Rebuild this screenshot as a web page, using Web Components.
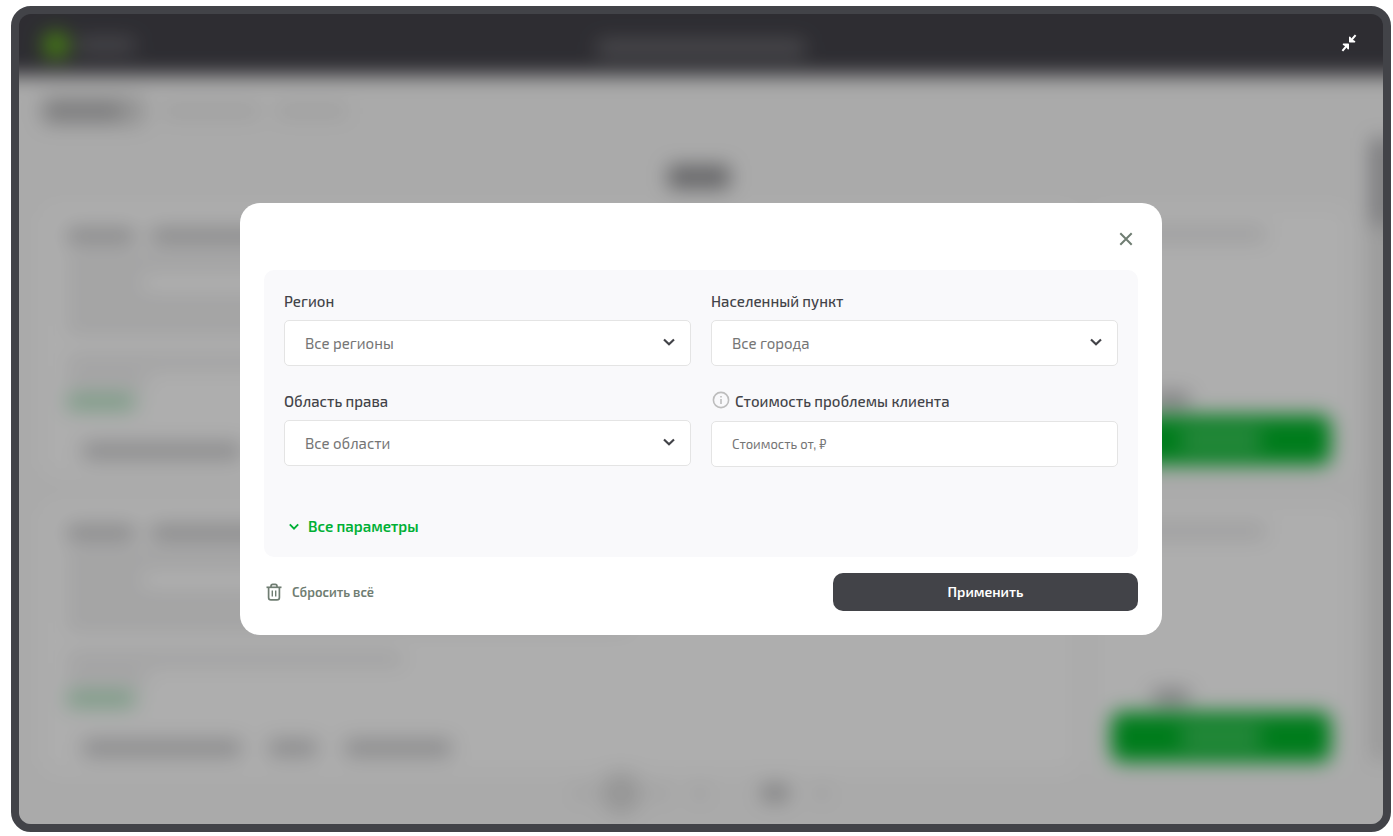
<!DOCTYPE html>
<html lang="ru">
<head>
<meta charset="utf-8">
<meta name="viewport" content="width=device-width, initial-scale=1">
<title>Фильтр заявок</title>
<style>
  html, body {
    height: 100%;
    margin: 0;
  }
  body {
    box-sizing: border-box;
    padding: 6px 2px 4px 11px;
    background: #fff;
    color: #424348;
    font: 15px/22px "Exo 2", Roboto, "Noto Sans", sans-serif;
  }
</style>
</head>
<body>
<app-frame>
  <page-backdrop></page-backdrop>
  <filter-modal slot="modal"></filter-modal>
</app-frame>

<script>
// Dark rounded frame: the page inside, the dimmed layer and the modal over it
class AppFrame extends HTMLElement {
  constructor() {
    super();
    this.attachShadow({ mode: 'open' });
  }

  connectedCallback() {
    this.shadowRoot.innerHTML = `
      <style>
        :host {
          display: block;
          box-sizing: border-box;
          position: relative;
          height: 100%;
          border: 8px solid #424348;
          border-radius: 20px;
          background: #424348;
        }
        .page {
          height: 100%;
          overflow: hidden;
          border-radius: 12px;
        }
        .overlay {
          position: absolute;
          inset: 0;
          display: grid;
          place-items: center;
          border-radius: 12px;
          background: rgba(0, 0, 0, .3);
        }
        .collapse {
          position: absolute;
          top: 17px;
          right: 22px;
          display: grid;
          place-items: center;
          width: 24px;
          height: 24px;
          padding: 0;
          border: 0;
          background: none;
          color: #fff;
          cursor: pointer;
        }
      </style>
      <div class="page"><slot></slot></div>
      <div class="overlay">
        <button class="collapse" type="button" aria-label="Свернуть">
          <svg width="16" height="18" viewBox="0 0 16 18" fill="currentColor" stroke="currentColor">
            <path d="M14.6 1.2 10 6.5M1.4 16.8 6 11.5" stroke-width="2"/>
            <path d="M8.7 3.2V7.7H13.6L11 6.2 10 5ZM7.3 14.8V10.3H2.4L5 11.8 6 13Z" stroke-width="1.4" stroke-linejoin="round"/>
          </svg>
        </button>
        <slot name="modal"></slot>
      </div>
    `;
  }
}
customElements.define('app-frame', AppFrame);

// One line of placeholder content
class SkeletonBar extends HTMLElement {
  constructor() {
    super();
    this.attachShadow({ mode: 'open' });
  }

  connectedCallback() {
    this.shadowRoot.innerHTML = `
      <style>
        :host {
          display: block;
          flex: none;
          width: ${this.getAttribute('w')}px;
          max-width: 100%;
          height: ${this.getAttribute('h') || 12}px;
          border-radius: 4px;
          background: var(--bar, rgba(66, 66, 72, .12));
        }
      </style>
    `;
  }
}
customElements.define('skeleton-bar', SkeletonBar);

// Order card: description on the left, price and action on the right
class OrderCard extends HTMLElement {
  constructor() {
    super();
    this.attachShadow({ mode: 'open' });
  }

  connectedCallback() {
    this.shadowRoot.innerHTML = `
      <style>
        :host {
          display: grid;
          grid-template-columns: 1fr 256px;
          gap: 16px;
          height: 268px;
        }
        .info, .side {
          display: flex;
          flex-direction: column;
          box-sizing: border-box;
          border-radius: 16px;
          background: #f9f9f9;
        }
        .info {
          gap: 9px;
          padding: 22px 24px 0;
        }
        .side {
          padding: 20px 18px 10px;
        }
        .row {
          display: flex;
          gap: 16px;
        }
        .title {
          --bar: rgba(66, 66, 72, .32);
          margin-bottom: 4px;
        }
        .block {
          margin-top: 17px;
        }
        .status {
          --bar: rgba(0, 160, 50, .34);
        }
        .chips {
          --bar: rgba(66, 66, 72, .28);
          gap: 28px;
          padding: 25px 16px 0;
        }
        .price {
          --bar: rgba(66, 66, 72, .4);
          margin: auto 0 8px 42px;
        }
        .action {
          --bar: rgba(255, 255, 255, .26);
          display: grid;
          place-items: center;
          height: 50px;
          border-radius: 10px;
          background: #00b228;
        }
      </style>
      <div class="info">
        <div class="row title">
          <skeleton-bar w="68" h="14"></skeleton-bar>
          <skeleton-bar w="240" h="14"></skeleton-bar>
        </div>
        <skeleton-bar w="400"></skeleton-bar>
        <skeleton-bar w="76"></skeleton-bar>
        <skeleton-bar w="600"></skeleton-bar>
        <skeleton-bar w="560"></skeleton-bar>
        <skeleton-bar class="block" w="335" h="10"></skeleton-bar>
        <skeleton-bar w="80" h="10"></skeleton-bar>
        <skeleton-bar class="status" w="68" h="14"></skeleton-bar>
        <div class="row chips">
          <skeleton-bar w="158" h="16"></skeleton-bar>
          <skeleton-bar w="48" h="16"></skeleton-bar>
          <skeleton-bar w="106" h="16"></skeleton-bar>
        </div>
      </div>
      <div class="side">
        <skeleton-bar w="154" h="14"></skeleton-bar>
        <skeleton-bar class="price" w="36" h="14"></skeleton-bar>
        <div class="action"><skeleton-bar w="80" h="20"></skeleton-bar></div>
      </div>
    `;
  }
}
customElements.define('order-card', OrderCard);

// The page behind the modal. The shadows carry its colours past the edges,
// so that the blur does not fade there
class PageBackdrop extends HTMLElement {
  constructor() {
    super();
    this.attachShadow({ mode: 'open' });
  }

  connectedCallback() {
    this.setAttribute('aria-hidden', 'true');
    this.shadowRoot.innerHTML = `
      <style>
        :host {
          display: flex;
          flex-direction: column;
          height: 100%;
          background: #f4f4f4;
          box-shadow: 0 0 0 40px #f4f4f4;
          filter: blur(10px);
        }
        header {
          display: grid;
          grid-template-columns: 1fr auto 1fr;
          align-items: center;
          height: 61px;
          padding: 0 24px;
          background: #424148;
          box-shadow: 0 -40px 0 40px #424148;
        }
        .brand, .tabs, .pages {
          display: flex;
          align-items: center;
        }
        .brand {
          --bar: rgba(255, 255, 255, .22);
          gap: 8px;
        }
        .brand i {
          width: 26px;
          height: 26px;
          border-radius: 50%;
          background: #68bc1c;
        }
        .name {
          --bar: rgba(255, 255, 255, .24);
          margin-top: 6px;
        }
        main {
          display: grid;
          grid-template-columns: 1fr 10px;
          flex: 1;
          min-height: 0;
        }
        .content {
          display: flex;
          flex-direction: column;
          padding: 21px 24px 0 22px;
        }
        .tabs {
          gap: 18px;
          --bar: rgba(66, 66, 72, .09);
        }
        .tabs div {
          --bar: rgba(66, 66, 72, .26);
          box-sizing: border-box;
          width: 104px;
          padding: 7px 4px;
          border-radius: 8px;
          background: #d4d4d4;
        }
        .heading {
          --bar: rgba(66, 66, 72, .54);
          align-self: center;
          margin: 39px 0 18px 8px;
        }
        .cards {
          display: flex;
          flex-direction: column;
          gap: 29px;
          margin-left: 2px;
        }
        .pages {
          gap: 28px;
          justify-content: center;
          margin-left: 14px;
        }
        .pages i {
          width: 42px;
          height: 42px;
          margin: 0 -16px;
          border-radius: 50%;
          background: #d8d8d8;
        }
        .last {
          --bar: rgba(66, 66, 72, .36);
          margin-left: 28px;
        }
        .scroll {
          margin: 63px 0 64px;
          background: #ccc;
          box-shadow: 20px 0 #ccc;
        }
        .scroll i {
          display: block;
          height: 87px;
          background: #86868c;
          box-shadow: 20px 0 #86868c;
        }
      </style>
      <header>
        <div class="brand"><i></i><skeleton-bar w="58" h="14"></skeleton-bar></div>
        <skeleton-bar class="name" w="208" h="16"></skeleton-bar>
      </header>
      <main>
        <div class="content">
          <div class="tabs">
            <div><skeleton-bar w="76" h="16"></skeleton-bar></div>
            <skeleton-bar w="96" h="14"></skeleton-bar>
            <skeleton-bar w="70" h="14"></skeleton-bar>
          </div>
          <skeleton-bar class="heading" w="62" h="24"></skeleton-bar>
          <div class="cards">
            <order-card></order-card>
            <order-card></order-card>
          </div>
          <div class="pages">
            <skeleton-bar w="12"></skeleton-bar>
            <i></i>
            <skeleton-bar w="12"></skeleton-bar>
            <skeleton-bar w="12"></skeleton-bar>
            <skeleton-bar class="last" w="26" h="16"></skeleton-bar>
            <skeleton-bar w="12"></skeleton-bar>
          </div>
        </div>
        <div class="scroll"><i></i></div>
      </main>
    `;
  }
}
customElements.define('page-backdrop', PageBackdrop);

// Labelled drop-down, the label comes through the slot
class SelectField extends HTMLElement {
  constructor() {
    super();
    this.attachShadow({ mode: 'open' });
  }

  connectedCallback() {
    this.shadowRoot.innerHTML = `
      <style>
        :host {
          display: block;
        }
        label {
          display: block;
          margin-bottom: 8px;
          font-weight: 500;
        }
        .box {
          display: grid;
          align-items: center;
        }
        select, svg {
          grid-area: 1 / 1;
        }
        select {
          appearance: none;
          box-sizing: border-box;
          width: 100%;
          height: 46px;
          padding: 0 40px 0 20px;
          border: 1px solid #e4e4e4;
          border-radius: 5px;
          background: #fff;
          color: #757575;
          font: inherit;
        }
        svg {
          justify-self: end;
          margin-right: 16px;
          margin-bottom: 2px;
          pointer-events: none;
        }
      </style>
      <label for="field"><slot></slot></label>
      <div class="box">
        <select id="field"><option>${this.getAttribute('value')}</option></select>
        <svg width="12" height="8" viewBox="0 0 12 8" fill="none" stroke="#424348" stroke-width="2.2">
          <path d="M1 1.5 6 6.2 11 1.5"/>
        </svg>
      </div>
    `;
  }
}
customElements.define('select-field', SelectField);

// Labelled text box with an info icon before the label
class PriceField extends HTMLElement {
  constructor() {
    super();
    this.attachShadow({ mode: 'open' });
  }

  connectedCallback() {
    this.shadowRoot.innerHTML = `
      <style>
        :host {
          display: block;
        }
        .head {
          display: flex;
          gap: 5px;
          margin-bottom: 9px;
          padding-left: 1px;
          font-weight: 500;
        }
        input {
          box-sizing: border-box;
          width: 100%;
          height: 46px;
          padding: 0 20px;
          border: 1px solid #e4e4e4;
          border-radius: 5px;
          background: #fff;
          font: inherit;
          font-size: 13px;
        }
        input::placeholder {
          color: #757575;
        }
      </style>
      <div class="head">
        <svg width="18" height="20" viewBox="0 0 18 20" fill="none" stroke="#bdbdbd" stroke-width="1.6">
          <circle cx="9" cy="10" r="7.6"/>
          <path d="M9 9v5M9 6v1.6"/>
        </svg>
        <label for="field"><slot></slot></label>
      </div>
      <input id="field" type="text" placeholder="${this.getAttribute('placeholder')}">
    `;
  }
}
customElements.define('price-field', PriceField);

// Modal window with the filter form
class FilterModal extends HTMLElement {
  constructor() {
    super();
    this.attachShadow({ mode: 'open' });
  }

  connectedCallback() {
    this.shadowRoot.innerHTML = `
      <style>
        :host {
          display: flex;
          flex-direction: column;
          box-sizing: border-box;
          width: 922px;
          max-width: 100%;
          padding: 24px;
          border-radius: 20px;
          background: #fff;
        }
        button {
          padding: 0;
          border: 0;
          background: none;
          color: #6f7d72;
          font: inherit;
          cursor: pointer;
        }
        .close {
          display: grid;
          place-items: center;
          align-self: flex-end;
          width: 24px;
          height: 24px;
          margin-bottom: 19px;
        }
        .panel {
          padding: 20px;
          border-radius: 10px;
          background: #f9f9fb;
        }
        .fields {
          display: grid;
          grid-template-columns: 1fr 1fr;
          gap: 24px 20px;
        }
        .more {
          display: flex;
          align-items: center;
          gap: 9px;
          margin-top: 48px;
          padding-left: 5px;
          color: #00b035;
          font-weight: 600;
        }
        .footer {
          display: flex;
          align-items: center;
          justify-content: space-between;
          margin-top: 16px;
        }
        .reset {
          display: flex;
          align-items: center;
          gap: 10px;
          padding-left: 2px;
          font-size: 13px;
          font-weight: 600;
        }
        .apply {
          width: 305px;
          height: 38px;
          border-radius: 10px;
          background: #424348;
          color: #fff;
          font-size: 14px;
          font-weight: 600;
        }
      </style>
      <button class="close" type="button" aria-label="Закрыть">
        <svg width="14" height="14" viewBox="0 0 14 14" fill="none" stroke="currentColor" stroke-width="2">
          <path d="M1.3 1.3 12.7 12.7M12.7 1.3 1.3 12.7"/>
        </svg>
      </button>
      <div class="panel">
        <div class="fields">
          <select-field value="Все регионы">Регион</select-field>
          <select-field value="Все города">Населенный пункт</select-field>
          <select-field value="Все области">Область права</select-field>
          <price-field placeholder="Стоимость от, ₽">Стоимость проблемы клиента</price-field>
        </div>
        <button class="more" type="button">
          <svg width="10" height="8" viewBox="0 0 10 8" fill="none" stroke="currentColor" stroke-width="1.9">
            <path d="M.8 2.4 5 6.6 9.2 2.4"/>
          </svg>
          Все параметры
        </button>
      </div>
      <div class="footer">
        <button class="reset" type="button">
          <svg width="16" height="18" viewBox="0 0 16 18" fill="none" stroke="currentColor" stroke-width="1.7">
            <path d="M.5 4.3h15"/>
            <path d="M5 4V3.2Q5 1.3 6.8 1.3H9.2Q11 1.3 11 3.2V4"/>
            <path d="M2.6 4.3V14.4Q2.6 16.8 5 16.8H11Q13.4 16.8 13.4 14.4V4.3"/>
            <path d="M6.3 7.5v6M9.7 7.5v6" stroke-width="1.4"/>
          </svg>
          Сбросить всё
        </button>
        <button class="apply" type="button">Применить</button>
      </div>
    `;
  }
}
customElements.define('filter-modal', FilterModal);
</script>
</body>
</html>
